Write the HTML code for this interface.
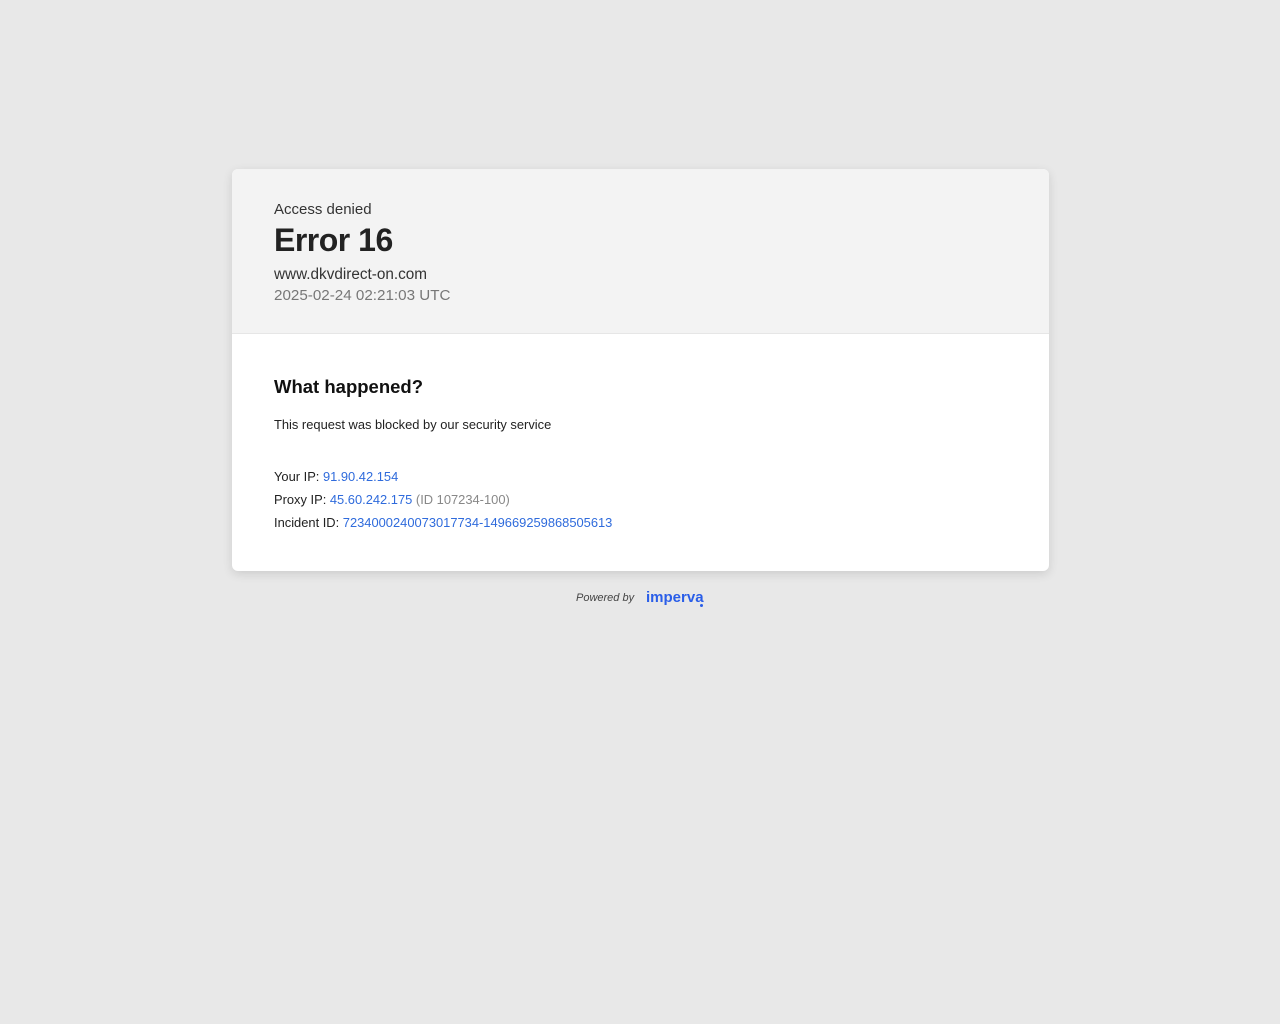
<!DOCTYPE html>
<html><head><meta charset="utf-8"><style>
html,body{margin:0;padding:0;background:#e8e8e8;font-family:"Liberation Sans",sans-serif;}
.card{position:absolute;left:232px;top:169px;width:817px;height:402px;background:#fff;border-radius:6px;box-shadow:0 3px 10px rgba(0,0,0,0.12);overflow:hidden;}
.head{background:#f3f3f3;height:164px;border-bottom:1px solid #e6e6e6;position:relative;}
.t{position:absolute;left:42px;white-space:nowrap;}
.blue{color:#2f6bdc;}
</style></head><body>
<div class="card">
<div class="head">
<div class="t" style="top:32px;font-size:15px;color:#333;">Access denied</div>
<div class="t" style="top:53px;font-size:32px;font-weight:bold;color:#222;letter-spacing:-0.5px;">Error 16</div>
<div class="t" style="top:97px;font-size:15.3px;color:#333;">www.dkvdirect-on.com</div>
<div class="t" style="top:118px;font-size:15.2px;color:#777;">2025-02-24 02:21:03 UTC</div>
</div>
<div class="t" style="top:207px;font-size:18.5px;font-weight:bold;color:#111;">What happened?</div>
<div class="t" style="top:248px;font-size:12.9px;color:#222;">This request was blocked by our security service</div>
<div class="t" style="top:300px;font-size:12.9px;color:#222;">Your IP: <span class="blue">91.90.42.154</span></div>
<div class="t" style="top:323px;font-size:12.9px;color:#222;">Proxy IP: <span class="blue">45.60.242.175</span> <span style="color:#888">(ID 107234-100)</span></div>
<div class="t" style="top:346px;font-size:12.9px;color:#222;">Incident ID: <span class="blue">7234000240073017734-149669259868505613</span></div>
</div>
<div style="position:absolute;left:576px;top:592px;font-size:11px;font-style:italic;color:#444;">Powered by</div>
<div style="position:absolute;left:646px;top:589px;font-size:15px;font-weight:bold;color:#2a5ee8;">imperva<span style="position:absolute;right:1px;top:15px;width:3px;height:3px;background:#2a5ee8;border-radius:2px;"></span></div>
</body></html>
